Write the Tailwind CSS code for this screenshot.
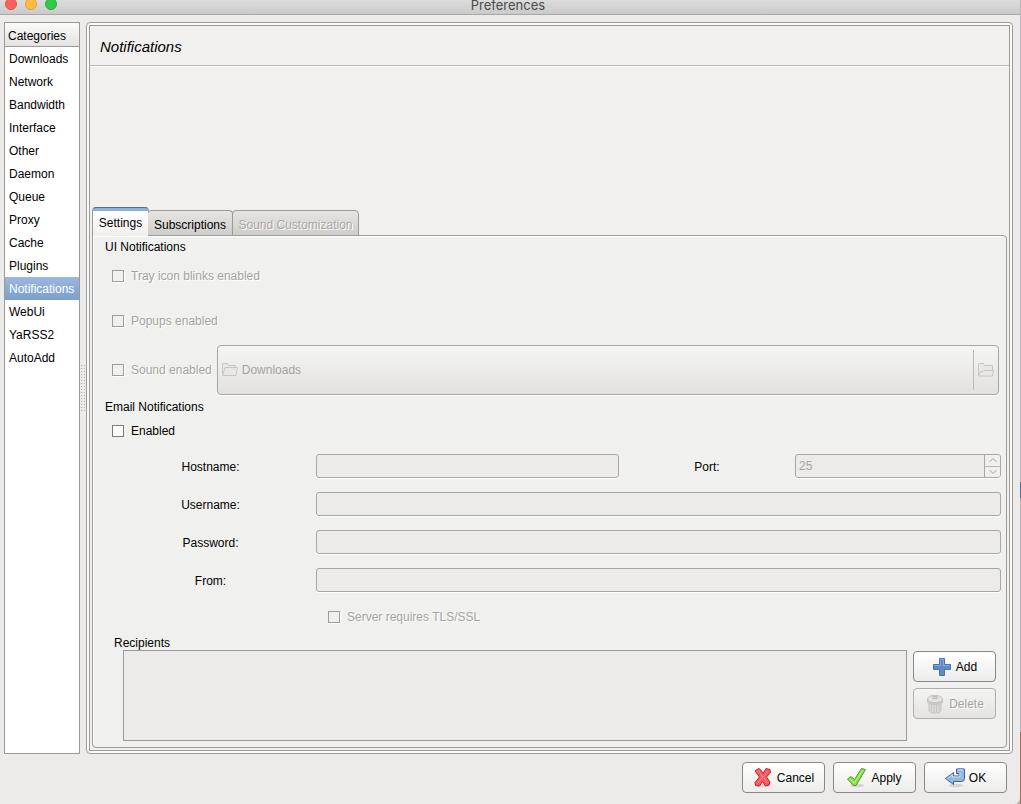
<!DOCTYPE html>
<html lang="en">
<head>
<meta charset="utf-8">
<title>Preferences</title>
<script src="https://cdn.jsdelivr.net/npm/@tailwindcss/browser@4"></script>
</head>
<body class="flex h-screen bg-[#b4b4b6] font-['Liberation_Sans',Arial,sans-serif] text-xs leading-4 text-black">
<div class="flex min-w-0 flex-1 flex-col overflow-hidden rounded-br-md bg-[#ecebea]">
  <header class="relative flex h-[15px] shrink-0 justify-center border-b border-[#a8a8a8] bg-linear-to-b from-[#dcdcdc] to-[#cacaca]">
    <div class="absolute -top-0.5 left-[5px] flex gap-2">
      <span class="size-3 rounded-full border border-[#e2524b] bg-[#fc605c]"></span>
      <span class="size-3 rounded-full border border-[#e0a030] bg-[#fdbc40]"></span>
      <span class="size-3 rounded-full border border-[#27aa35] bg-[#34c84a]"></span>
    </div>
    <h1 class="h-3 pr-1 font-[Inter,sans-serif] text-[13px] leading-[10px] text-[#4a4a4a]">Preferences</h1>
  </header>

  <div class="flex min-h-0 flex-1 pt-[7px] pr-[7px] pl-1">
    <nav class="flex w-[76px] shrink-0 flex-col border border-[#9c9a98] bg-white">
      <h2 class="h-6 shrink-0 border-b border-[#9c9a98] bg-linear-to-b from-[#fafafa] to-[#e4e3e1] pl-[3px] leading-[26px]">Categories</h2>
      <a href="#" class="h-[23px] pl-1 leading-6">Downloads</a>
      <a href="#" class="h-[23px] pl-1 leading-6">Network</a>
      <a href="#" class="h-[23px] pl-1 leading-6">Bandwidth</a>
      <a href="#" class="h-[23px] pl-1 leading-6">Interface</a>
      <a href="#" class="h-[23px] pl-1 leading-6">Other</a>
      <a href="#" class="h-[23px] pl-1 leading-6">Daemon</a>
      <a href="#" class="h-[23px] pl-1 leading-6">Queue</a>
      <a href="#" class="h-[23px] pl-1 leading-6">Proxy</a>
      <a href="#" class="h-[23px] pl-1 leading-6">Cache</a>
      <a href="#" class="h-[23px] pl-1 leading-6">Plugins</a>
      <a href="#" aria-current="page" class="h-[23px] bg-linear-to-b from-[#9cb8e0] to-[#7a9fcf] pl-1 leading-6 text-white">Notifications</a>
      <a href="#" class="h-[23px] pl-1 leading-6">WebUi</a>
      <a href="#" class="h-[23px] pl-1 leading-6">YaRSS2</a>
      <a href="#" class="h-[23px] pl-1 leading-6">AutoAdd</a>
    </nav>
    <div class="flex w-1.5 shrink-0 items-center justify-center">
      <div class="h-12 w-1.5 bg-[radial-gradient(circle_at_center,#b0aeac_20%,transparent_35%)] bg-size-[3px_3px]"></div>
    </div>

    <main class="flex min-w-0 flex-1 rounded border border-[#9c9a98] bg-[#fafaf9] p-0.5">
      <div class="flex min-w-0 flex-1 flex-col border border-[#9c9a98] bg-[#f1f0ee] p-0.5">
        <h2 class="-mx-0.5 flex h-[38px] shrink-0 items-center border-b border-[#bcbab8] pl-2.5 text-[15px] italic shadow-[0_1px_0_#fff]">Notifications</h2>
        <div role="tablist" class="relative z-10 mt-[141px] -mb-px flex shrink-0 items-end">
          <button role="tab" aria-selected="true" class="h-[29px] w-[57px] rounded-t border border-b-0 border-[#9c9a98] border-t-[#4a6f9f] bg-linear-to-b from-[#8fb0dc] from-[3px] via-white via-[3px] to-[#f1f0ee] pt-0.5">Settings</button>
          <button role="tab" aria-selected="false" class="-ml-px h-[26px] w-[85px] rounded-t border border-l-0 border-[#9c9a98] bg-linear-to-b from-[#e6e5e4] to-[#cfcdcb] pt-1">Subscriptions</button>
          <button role="tab" disabled class="-ml-px h-[26px] w-[127px] rounded-t border border-[#9c9a98] bg-linear-to-b from-[#e6e5e4] to-[#cfcdcb] pt-1 text-[#aaa8a6] [text-shadow:1px_1px_0_#fff]">Sound Customization</button>
        </div>

        <form class="flex min-h-0 flex-1 flex-col rounded-b rounded-tr border border-[#9c9a98] bg-[#f0f0ee] pr-[5px] pl-3 shadow-[inset_1px_1px_0_#fff]">
          <h3 class="mt-[3px]">UI Notifications</h3>
          <label class="mt-[13px] ml-[7px] flex h-4 items-center gap-[7px] text-[#a5a3a1] [text-shadow:1px_1px_0_#fff]"><input type="checkbox" disabled class="size-3 appearance-none border border-[#9f9d9b] shadow-[1px_1px_0_#fff]">Tray icon blinks enabled</label>
          <label class="mt-[29px] ml-[7px] flex h-4 items-center gap-[7px] text-[#a5a3a1] [text-shadow:1px_1px_0_#fff]"><input type="checkbox" disabled class="size-3 appearance-none border border-[#9f9d9b] shadow-[1px_1px_0_#fff]">Popups enabled</label>
          <div class="mt-4 mr-0.5 ml-[7px] flex items-center gap-[5px] text-[#a5a3a1] [text-shadow:1px_1px_0_#fff]">
            <label class="flex shrink-0 items-center gap-[7px]"><input type="checkbox" disabled class="size-3 appearance-none border border-[#9f9d9b] shadow-[1px_1px_0_#fff]">Sound enabled</label>
            <button type="button" disabled class="flex h-[50px] flex-1 items-center rounded border border-[#aaa6a5] bg-linear-to-b from-[#f5f5f4] to-[#e2e1e0] pr-1 pl-1 shadow-[0_1px_0_#fff]">
              <svg class="mr-1 size-4" viewBox="0 0 16 16" fill="#e8e7e6" stroke="#c8c6c4"><path d="M.5 12V1.500H5.500L6.500 3.500H13.500V5.500"/><path d="M3 5.500H15.500L14 13.500H.5Z"/></svg>
              <span>Downloads</span>
              <span class="mr-1 ml-auto h-10 border-l border-[#bbb8b6] shadow-[inset_1px_0_0_#fff]"></span>
              <svg class="size-4" viewBox="0 0 16 16" fill="#e8e7e6" stroke="#c8c6c4"><path d="M.5 13V1.500H5.500L6.500 3.500H14.500V9"/><path d="M2.500 9.500H5L6 8.500H15.500L14.500 14H.5Z"/></svg>
            </button>
          </div>
          <h3 class="mt-1">Email Notifications</h3>
          <label class="mt-2 ml-[7px] flex h-4 items-center gap-[7px]"><input type="checkbox" class="size-3 appearance-none border border-[#7d7b79] bg-white">Enabled</label>

          <div class="mt-[15px] grid grid-cols-[211px_minmax(0,303fr)_176px_minmax(0,206fr)] gap-y-3">
            <label for="host" class="text-center leading-[26px]">Hostname:</label>
            <input id="host" disabled class="h-6 w-full rounded-[3px] border border-[#aaa6a5] bg-[#ecebe9] shadow-[0_1px_0_#fff]">
            <label for="port" class="text-center leading-[26px]">Port:</label>
            <div class="flex h-6 overflow-hidden rounded-[3px] border border-[#aaa6a5] bg-[#ecebe9] shadow-[0_1px_0_#fff]">
              <input id="port" value="25" disabled class="min-w-0 flex-1 pl-[3px] text-[#a5a3a1]">
              <div class="flex w-4 flex-col divide-y divide-[#bbb8b6] border-l border-[#aaa6a5] bg-[#f0efee]">
                <button type="button" disabled aria-label="Increase" class="flex flex-1 items-center justify-center"><svg class="h-1.5 w-2" viewBox="0 0 8 6" fill="none" stroke="#a5a3a1"><path d="M.5 5 4 1.500 7.500 5"/></svg></button>
                <button type="button" disabled aria-label="Decrease" class="flex flex-1 items-center justify-center"><svg class="h-1.5 w-2" viewBox="0 0 8 6" fill="none" stroke="#a5a3a1"><path d="M.5 1 4 4.500 7.500 1"/></svg></button>
              </div>
            </div>
            <label for="user" class="text-center leading-[26px]">Username:</label>
            <input id="user" disabled class="col-span-3 h-6 rounded-[3px] border border-[#aaa6a5] bg-[#ecebe9] shadow-[0_1px_0_#fff]">
            <label for="pass" class="text-center leading-[26px]">Password:</label>
            <input id="pass" type="password" disabled class="col-span-3 h-6 rounded-[3px] border border-[#aaa6a5] bg-[#ecebe9] shadow-[0_1px_0_#fff]">
            <label for="from" class="text-center leading-[26px]">From:</label>
            <input id="from" disabled class="col-span-3 h-6 rounded-[3px] border border-[#aaa6a5] bg-[#ecebe9] shadow-[0_1px_0_#fff]">
          </div>
          <label class="mt-[15px] ml-[223px] flex h-4 items-center gap-[7px] text-[#a5a3a1] [text-shadow:1px_1px_0_#fff]"><input type="checkbox" disabled class="size-3 appearance-none border border-[#9f9d9b] shadow-[1px_1px_0_#fff]">Server requires TLS/SSL</label>
          <h3 id="rcp" class="mt-2.5 ml-[9px] h-[15px]">Recipients</h3>
          <div class="mr-[5px] mb-1.5 ml-[18px] flex min-h-0 flex-1 gap-1.5">
            <div role="listbox" aria-labelledby="rcp" class="flex-1 border border-[#9c9a98] bg-[#ecebe9]"></div>
            <div class="flex w-[83px] flex-col gap-1.5 pt-px">
              <button type="button" class="flex h-[31px] items-center justify-center gap-1 rounded border border-[#8a8886] bg-linear-to-b from-white to-[#ececeb]">
                <svg class="size-5" viewBox="0 0 20 20"><path d="M7.500 1.500H12.500V7.500H18.500V12.500H12.500V18.500H7.500V12.500H1.500V7.500H7.500Z" fill="#5f8bc4" stroke="#4a74ad"/><path d="M2.500 8.500H8.500V2.500H11.500V8.500H17.500" fill="none" stroke="#86aad8"/></svg>Add</button>
              <button type="button" disabled class="flex h-[31px] items-center justify-center gap-1 rounded border border-[#b0aeac] bg-linear-to-b from-[#f4f4f3] to-[#e4e3e2] text-[#a5a3a1] [text-shadow:1px_1px_0_#fff]">
                <svg class="size-5" viewBox="0 0 20 20"><path d="M4 7V16.500C4 20 16 20 16 16.500V7Z" fill="#dbdad9" stroke="#c3c1bf"/><path d="M6.500 10V17M9 10.500V18M11.500 10.500V18M14 10V17" stroke="#c5c3c1"/><path d="M2.500 5.500V8C3.500 11 16.500 11 17.500 8V5.500Z" fill="#d0cfce" stroke="#c3c1bf"/><ellipse cx="10" cy="5" rx="7.500" ry="3.700" fill="#e4e3e2" stroke="#c5c3c1"/><ellipse cx="10" cy="3.500" rx="2.500" ry="1.200" fill="#d8d7d6" stroke="#b9b7b5"/></svg>Delete</button>
            </div>
          </div>
        </form>
      </div>
    </main>
  </div>

  <footer class="flex h-[50px] shrink-0 justify-end gap-2 pt-2 pr-[13px]">
    <button class="flex h-[31px] w-[83px] items-center justify-center gap-1 rounded border border-[#8a8886] bg-linear-to-b from-white to-[#ececeb]">
      <svg class="size-5" viewBox="0 0 20 20"><ellipse cx="10" cy="17.500" rx="8" ry="1.800" fill="#d5d4d3"/><path d="M2 3 5.500 .5 7.500 1.500 10 5.500 13 .5 17 1.500 17.500 4.500 13.500 9 17 14 16 17 12.500 18 9.500 13.500 6.500 18 2.500 17.500 2 14.500 6.500 9Z" fill="#f2595d" stroke="#cf1f2b" stroke-linejoin="round"/><path d="M4 4 5.500 2.500 9.500 9 4.500 15.500M14.500 2.500 10.500 9 14.500 15" fill="none" stroke="#f9888a"/></svg>Cancel</button>
    <button class="flex h-[31px] w-[83px] items-center justify-center gap-1 rounded border border-[#8a8886] bg-linear-to-b from-white to-[#ececeb]">
      <svg class="size-5" viewBox="0 0 20 20"><ellipse cx="10" cy="17.500" rx="7" ry="1.800" fill="#d5d4d3"/><path d="M.5 11 4 8.500 7.500 11.500 14.500 .5 18.500 1.500 9 17.500 6.500 17.500Z" fill="#8fdc53" stroke="#4f9e1d" stroke-linejoin="round"/><path d="M2.500 11 7.500 15 16 2" fill="none" stroke="#bdf08f"/></svg>Apply</button>
    <button class="flex h-[31px] w-[83px] items-center justify-center gap-1 rounded border border-[#8a8886] bg-linear-to-b from-white to-[#ececeb]">
      <svg class="size-5" viewBox="0 0 20 20"><ellipse cx="11" cy="17.500" rx="7" ry="1.800" fill="#d5d4d3"/><path d="M.5 10.500 8.500 4.500V8H14V5.500H11.500V1Q15 .5 19.500 1V10.500Q19.500 13.500 16.500 13.500H8.500V16.500Z" fill="#94b6e0" stroke="#35659f" stroke-linejoin="round"/><path d="M2.500 10.500 7.500 6.500V9H15V4.500M12.500 2H18.500" fill="none" stroke="#cfe0f4"/></svg>OK</button>
  </footer>
</div>
<aside aria-hidden="true" class="flex w-px shrink-0 flex-col">
  <div class="h-[482px] bg-[#b8b8ba]"></div><div class="h-4 bg-[#4a6fa5]"></div><div class="flex-1 bg-[#b0b0b2]"></div><div class="h-[72px] bg-[#a5714f]"></div>
</aside>
</body>
</html>
